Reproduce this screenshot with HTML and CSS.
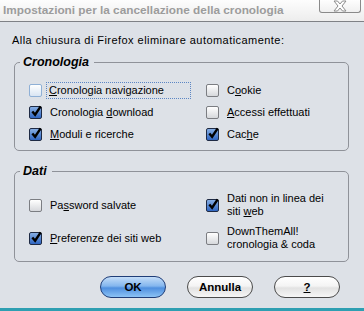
FILE: index.html
```html
<!DOCTYPE html>
<html>
<head>
    <link rel="stylesheet" href="styles.css">
</head>
<body>
    <div class="dialog">
        <div class="titlebar">
            <span class="title">Impostazioni per la cancellazione della cronologia</span>
            <span class="close">
                <svg width="16" height="12" viewBox="0 0 16 12">
                    <path d="M2 1 H5.5 L8 4 L10.5 1 H14 L10 6 L14 11 H10.5 L8 8 L5.5 11 H2 L6 6 Z" fill="#fff" stroke="#8c8c8c" stroke-width="1" stroke-linejoin="round"/>
                </svg>
            </span>
        </div>

        <div class="content">
            <p class="intro">Alla chiusura di Firefox eliminare automaticamente:</p>

            <fieldset class="group history">
                <legend>Cronologia</legend>
                <div class="grid">
                    <label class="item">
                        <span class="box focus-box"></span>
                        <span class="text focused"><u>C</u>ronologia navigazione</span>
                    </label>
                    <label class="item">
                        <span class="box"></span>
                        <span class="text">C<u>o</u>okie</span>
                    </label>
                    <label class="item">
                        <span class="box checked"><svg viewBox="0 0 14 14"><path d="M2.5 7 L5.5 10.5 L11.5 1.5" fill="none" stroke="#000" stroke-width="2.6"/></svg></span>
                        <span class="text">Cronologia <u>d</u>ownload</span>
                    </label>
                    <label class="item">
                        <span class="box"></span>
                        <span class="text"><u>A</u>ccessi effettuati</span>
                    </label>
                    <label class="item">
                        <span class="box checked"><svg viewBox="0 0 14 14"><path d="M2.5 7 L5.5 10.5 L11.5 1.5" fill="none" stroke="#000" stroke-width="2.6"/></svg></span>
                        <span class="text"><u>M</u>oduli e ricerche</span>
                    </label>
                    <label class="item">
                        <span class="box checked"><svg viewBox="0 0 14 14"><path d="M2.5 7 L5.5 10.5 L11.5 1.5" fill="none" stroke="#000" stroke-width="2.6"/></svg></span>
                        <span class="text">Cac<u>h</u>e</span>
                    </label>
                </div>
            </fieldset>

            <fieldset class="group data">
                <legend>Dati</legend>
                <div class="grid">
                    <label class="item">
                        <span class="box"></span>
                        <span class="text">Pa<u>s</u>sword salvate</span>
                    </label>
                    <label class="item">
                        <span class="box checked"><svg viewBox="0 0 14 14"><path d="M2.5 7 L5.5 10.5 L11.5 1.5" fill="none" stroke="#000" stroke-width="2.6"/></svg></span>
                        <span class="text">Dati non in linea dei<br>siti <u>w</u>eb</span>
                    </label>
                    <label class="item">
                        <span class="box checked"><svg viewBox="0 0 14 14"><path d="M2.5 7 L5.5 10.5 L11.5 1.5" fill="none" stroke="#000" stroke-width="2.6"/></svg></span>
                        <span class="text"><u>P</u>referenze dei siti web</span>
                    </label>
                    <label class="item">
                        <span class="box"></span>
                        <span class="text">DownThemAll!<br>cronologia &amp; coda</span>
                    </label>
                </div>
            </fieldset>

            <div class="buttons">
                <button class="btn default">OK</button>
                <button class="btn">Annulla</button>
                <button class="btn"><u>?</u></button>
            </div>
        </div>
        <div class="bottom-line"></div>
    </div>
</body>
</html>
```

FILE: styles.css
```css
body {
    margin: 0;
    width: 364px;
    height: 311px;
    overflow: hidden;
    background-color: #dde1e7;
    font-family: "Liberation Sans", Arial, sans-serif;
    font-size: 11px;
    color: #000;
}

.dialog {
    height: 311px;
    display: flex;
    flex-direction: column;
}

/* title bar */
.titlebar {
    height: 22px;
    box-sizing: border-box;
    border-bottom: 1px solid #7f8186;
    background: linear-gradient(#fdfdfd, #ededed);
    display: flex;
    align-items: center;
    justify-content: space-between;
    padding-left: 3px;
}

.title {
    font-weight: bold;
    font-size: 11.8px;
    color: #9c9c9c;
    margin-top: -1px;
}

.close {
    align-self: flex-start;
    width: 42px;
    height: 14px;
    margin-right: 3px;
    margin-top: -1px;
    box-sizing: border-box;
    border: 1px solid #8a8a8a;
    border-top: none;
    border-radius: 0 0 3px 3px;
    background: linear-gradient(#ffffff, #f0f0f0);
    display: flex;
    align-items: center;
    justify-content: center;
}

.close svg {
    display: block;
}

.content {
    flex: 1;
}

.intro {
    margin: 11px 0 8px 12px;
    line-height: 14px;
    letter-spacing: 0.45px;
}

/* group boxes */
.group {
    margin: 0 15px 0 14px;
    padding: 0 14px;
    border: 1px solid #8f9299;
    border-radius: 5px;
}

.group legend {
    font-weight: bold;
    font-style: italic;
    font-size: 12.5px;
    line-height: 14px;
    margin-left: -9px;
    padding: 0 5px 0 3px;
}

.history {
    padding-top: 10px;
    padding-bottom: 5px;
}

.data {
    margin-top: 13px;
    padding-top: 12px;
    padding-bottom: 8px;
}

.grid {
    display: grid;
    grid-template-columns: 177px 1fr;
}

.history .grid {
    grid-auto-rows: 22px;
}

.data .grid {
    grid-auto-rows: 30px;
    row-gap: 3px;
}

.item {
    display: flex;
    align-items: center;
    gap: 8px;
}

.text {
    line-height: 13px;
}

.text.focused {
    flex: 1;
    margin: 0 16px 0 -3px;
    padding: 1px 2px;
    outline: 1px dotted #5c86c4;
    outline-offset: 0;
}

/* checkboxes */
.box {
    width: 13px;
    height: 13px;
    flex: none;
    box-sizing: border-box;
    border: 1px solid #7b7d82;
    border-radius: 2px;
    background: linear-gradient(#ffffff, #d6d8dc);
    position: relative;
}

.box.focus-box {
    border-color: #8fb0d6;
    background: linear-gradient(#ffffff, #d9e5f3);
}

.box.checked {
    border-color: #1e2a44;
    background: linear-gradient(#86aee4, #2f66c2);
}

.box svg {
    position: absolute;
    left: 0;
    top: -2px;
    width: 13px;
    height: 13px;
}

/* buttons */
.buttons {
    display: flex;
    justify-content: flex-end;
    gap: 21px;
    margin: 14px 24px 0 0;
}

.btn {
    width: 66px;
    height: 22px;
    padding: 0;
    border: 1px solid #4b4b4b;
    border-radius: 11px;
    background: linear-gradient(#ffffff 0%, #f4f4f4 45%, #e2e2e2 55%, #f6f6f6 100%);
    font-family: "Liberation Sans", Arial, sans-serif;
    font-size: 11.5px;
    font-weight: bold;
    color: #000;
}

.btn.default {
    border-color: #1f3d78;
    background: linear-gradient(#c4ddf8 0%, #84b6ee 45%, #4f8fdf 55%, #8cc3f5 100%);
}

.bottom-line {
    height: 3px;
    background-color: #2e9fb2;
}
```
